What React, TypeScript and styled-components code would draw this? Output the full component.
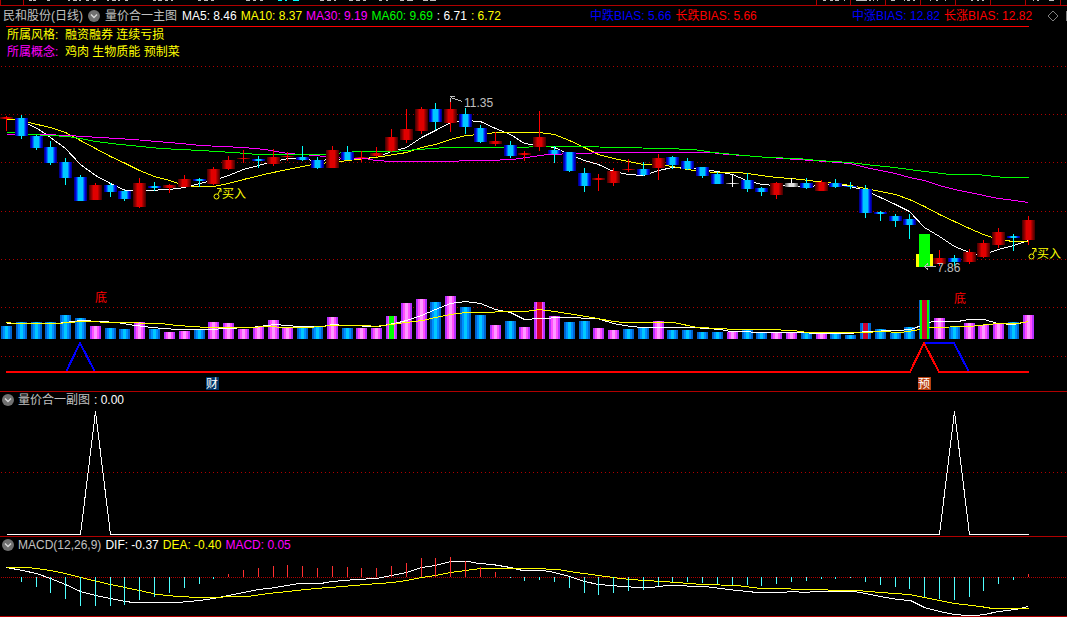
import React from "react";
import styled, { createGlobalStyle } from "styled-components";

const GlobalStyle = createGlobalStyle`
  * { box-sizing: border-box; }
  body {
    margin: 0;
    background: #000;
    font-family: "Liberation Sans", "Noto Sans CJK SC", sans-serif;
    font-size: 12px;
  }
`;

const RULE = "#b00000";
const SILVER = "#c0c0c0";
const YELLOW = "#ffff00";
const MAGENTA = "#ff00ff";
const WHITE = "#ffffff";
const RED = "#ff0000";
const GREEN = "#00ff00";
const BLUE = "#0000ff";

/* ---------- market data, in chart coordinates ---------- */

type Kind = "r" | "b" | "w";
type Candle = [Kind, number, number, number, number];

// kind, high, body top, body bottom, low
const candles: (Candle | null)[] = [
  ["r", 116, 117, 119, 131], ["b", 115, 118, 136, 139], ["b", 135, 136, 148, 150],
  ["b", 141, 147, 163, 165], ["b", 158, 162, 178, 185], ["b", 175, 177, 201, 201],
  ["r", 183, 185, 200, 200], ["b", 183, 185, 192, 197], ["b", 190, 191, 199, 201],
  ["r", 178, 183, 207, 208], ["b", 182, 186, 188, 191], ["r", 184, 185, 188, 193],
  ["r", 175, 179, 187, 187], ["b", 178, 179, 181, 187], ["r", 167, 169, 184, 185],
  ["r", 156, 160, 169, 170], ["r", 150, 158, 159, 163], ["b", 156, 159, 161, 168],
  ["r", 149, 157, 164, 166], ["r", 152, 156, 157, 161], ["b", 146, 157, 160, 161],
  ["b", 157, 160, 168, 169], ["r", 146, 150, 168, 168], ["b", 146, 152, 160, 160],
  ["r", 151, 157, 158, 162], ["r", 147, 153, 156, 157], ["r", 129, 137, 151, 152],
  ["r", 109, 129, 140, 143], ["r", 107, 109, 131, 134], ["b", 103, 109, 122, 130],
  ["r", 100, 109, 123, 132], ["b", 108, 114, 127, 134], ["b", 125, 128, 142, 143],
  ["r", 132, 141, 144, 146], ["b", 141, 145, 156, 158], ["r", 151, 153, 155, 161],
  ["r", 111, 137, 147, 151], ["b", 146, 150, 154, 163], ["b", 152, 152, 171, 172],
  ["b", 168, 173, 186, 192], ["r", 174, 178, 180, 191], ["r", 168, 171, 183, 186],
  ["r", 159, 169, 170, 172], ["b", 162, 169, 175, 176], ["r", 154, 158, 168, 180],
  ["b", 156, 157, 165, 169], ["b", 158, 161, 169, 170], ["b", 167, 167, 176, 178],
  ["b", 172, 174, 184, 184], ["w", 175, 183, 184, 187], ["b", 173, 180, 189, 192],
  ["b", 187, 188, 192, 196], ["r", 182, 183, 195, 199], ["w", 178, 183, 187, 187],
  ["b", 178, 183, 188, 189], ["r", 180, 182, 191, 191], ["b", 179, 183, 187, 188],
  ["b", 182, 186, 187, 189], ["b", 185, 189, 213, 218], ["b", 211, 212, 214, 221],
  ["b", 214, 216, 221, 227], ["b", 214, 219, 225, 239], null,
  ["r", 250, 258, 264, 266], ["b", 255, 258, 262, 266], ["r", 249, 252, 262, 264],
  ["r", 240, 243, 257, 258], ["r", 228, 232, 245, 248], ["b", 234, 236, 238, 251],
  ["r", 216, 220, 240, 245],
];

const volumeKinds = "bbbbbbpbbpbppbpppppp" + "bbpbpppppbpbbpbpppbb" + "ppbbpbbbbpbbppbpbbbb" + "bbbpbpppbp";
const volumeTops = [
  326, 322, 322, 322, 315, 318, 326, 328, 329, 322, 329, 332, 331, 330, 322, 323, 329, 327, 320, 328,
  327, 327, 317, 328, 328, 328, 316, 303, 299, 302, 296, 307, 315, 325, 321, 327, 302, 316, 322, 321,
  328, 330, 329, 327, 321, 330, 330, 332, 332, 332, 330, 333, 333, 333, 333, 334, 334, 335, 323, 329,
  333, 327, 300, 318, 327, 323, 325, 324, 322, 315,
];
const VOLUME_BASE = 339;

const macdEnds = [
  577, 582, 587, 593, 599, 606, 606, 606, 605, 600, 597, 593, 588, 584, 579, 574, 570, 568, 566, 565,
  566, 568, 566, 567, 568, 568, 566, 563, 558, 558, 557, 561, 567, 572, 578, 581, 580, 582, 588, 593,
  595, 593, 591, 590, 586, 582, 582, 583, 584, 585, 585, 586, 584, 582, 581, 579, 579, 578, 582, 585,
  587, 589, 597, 599, 600, 597, 591, 584, 580, 574,
];

const ma5 =
  "6,118 15,119 28,124 37,128 50,137 65,148 80,164 95,175 110,183 125,190 147,190 169,189 184,187 199,183 213,180 228,175 243,169 258,165 273,161 288,158 302,159 317,160 332,159 347,158 361,158 376,157 391,151 406,147 421,137 435,130 450,122 465,120 480,121 495,128 510,134 524,143 539,145 554,147 569,154 584,160 598,164 613,171 628,174 643,175 658,170 672,167 687,167 702,169 717,171 732,174 746,180 761,184 776,185 806,186 835,184 850,186 865,190 880,197 895,204 909,211 924,227 939,236 954,246 969,252 975,254 983,254 998,249 1013,245 1028,240";
const ma10 =
  "6,119 15,119 28,122 50,127 65,132 80,140 95,148 110,156 125,163 139,170 154,176 169,180 184,185 192,186 213,186 228,183 243,179 268,173 287,169 302,166 317,163 332,162 347,160 365,158 382,156 406,152 421,147 435,144 450,139 465,135 480,134 495,132 539,132 554,134 569,140 584,147 598,154 613,158 628,161 643,164 658,164 672,166 687,169 702,171 717,172 739,172 761,175 776,177 791,178 817,181 835,183 850,185 865,188 880,191 895,194 909,199 924,206 939,214 954,221 969,228 983,234 992,237 1005,240 1013,241 1028,241";
const ma30 =
  "6,134 44,134 67,135 100,137 133,139 180,143 200,145 243,147 265,149 287,153 315,155 332,157 347,158 365,158 375,160 392,161 452,161 465,160 488,160 512,159 533,156 547,154 577,153 607,152 710,152 727,154 743,155 768,157 797,159 825,161 850,163 865,167 880,170 895,173 909,177 924,180 939,185 954,189 969,192 998,198 1014,200 1028,202";
const ma60 =
  "6,132 14,132 29,134 50,135 67,136 80,138 95,141 120,144 160,148 200,150 233,152 257,154 325,154 345,152 358,151 392,151 418,149 445,147 525,147 533,146 577,146 620,147 663,148 693,149 713,152 743,155 768,157 797,158 817,160 850,162 865,164 894,167 924,171 950,174 977,174 1004,177 1028,177";
const volFast =
  "6,323 57,323 80,320 100,321 117,322 128,324 143,326 162,328 178,329 213,329 223,328 250,327 275,324 298,326 322,326 332,324 345,325 378,326 398,322 406,320 421,315 435,309 450,303 465,301 480,303 495,309 510,312 524,319 539,318 563,317 597,318 613,323 630,326 643,327 693,327 720,329 730,331 770,332 800,332 817,333 850,333 865,331 897,330 910,329 924,324 932,321 957,321 969,319 984,319 997,323 1013,324 1028,321";
const volSlow =
  "6,322 15,323 57,323 80,321 117,322 160,323 177,325 207,327 247,327 268,326 285,327 308,327 332,325 365,325 375,326 398,323 422,320 435,317 450,314 465,312 525,311 539,309 554,311 580,315 597,318 613,321 623,322 673,322 697,327 720,328 733,329 767,329 793,330 807,332 865,332 880,331 900,332 914,330 930,327 969,326 997,323 1017,323 1028,321";
const dif =
  "6,567 22,570 36,573 50,578 65,584 80,591 95,595 110,598 125,601 133,602 177,602 199,600 213,598 228,595 243,592 258,589 268,588 287,585 298,583 320,583 332,581 355,579 376,578 391,575 406,572 421,567 435,565 450,561 468,561 478,563 492,564 510,567 522,570 542,570 554,572 569,576 584,581 598,584 610,585 637,587 650,587 667,585 705,586 720,588 737,590 757,592 780,592 793,591 803,592 817,591 854,591 865,593 880,596 897,599 910,600 924,607 939,611 954,614 967,615 975,615 984,614 998,611 1015,609 1028,606";
const dea =
  "6,567 28,567 50,570 65,573 80,577 110,584 139,590 157,594 177,596 199,597 247,596 268,593 287,591 315,588 342,586 365,584 392,582 406,580 421,577 435,575 450,572 465,570 480,568 533,568 557,569 569,571 598,575 620,578 643,580 663,581 702,584 737,585 760,588 783,588 797,589 857,590 880,592 909,594 924,597 939,600 954,603 980,606 992,608 1028,608";

const barX = (i: number) => Math.round(6 + i * 14.81);

/* ---------- styled parts ---------- */

const Screen = styled.main`
  width: 100%;
  background: #000;
`;

const TopStrip = styled.div`
  display: flex;
  height: 6px;
  border-bottom: 1px solid ${RULE};
  overflow: hidden;
`;

const StripCell = styled.div<{ $width: number }>`
  flex: 0 0 ${(p) => p.$width}px;
  border-left: 1px solid ${RULE};
  overflow: hidden;
`;

const StripPeriods = styled.div`
  flex: 1;
  border-left: 1px solid ${RULE};
  overflow: hidden;
`;

const StripMarks = styled.svg`
  display: block;
  height: 1px;
`;

const Panel = styled.section`
  border-bottom: 1px solid ${RULE};
`;

const MainHeader = styled.header`
  display: grid;
  grid-template-columns: 590fr 262fr 215fr;
  align-items: center;
  height: 20px;
  white-space: nowrap;
`;

const SubHeader = styled.header`
  display: flex;
  align-items: center;
  gap: 4px;
  height: 18px;
  padding: 0 0 2px 2px;
  white-space: nowrap;
`;

const Group = styled.div<{ $gap: number; $indent?: number }>`
  display: flex;
  align-items: center;
  gap: ${(p) => p.$gap}px;
  padding-left: ${(p) => p.$indent ?? 0}px;
  min-width: 0;
`;

const Label = styled.span<{ $color: string }>`
  color: ${(p) => p.$color};
  line-height: 16px;
`;

const Toggle = styled.button`
  display: block;
  flex: none;
  width: 12px;
  height: 12px;
  padding: 0;
  border: 0;
  background: none;
`;

const Tools = styled.div`
  display: flex;
  align-items: center;
  gap: 7px;
  margin-left: auto;
`;

const ToolEdge = styled.span`
  width: 1px;
  height: 10px;
  background: #808080;
`;

const TopLine = styled.div`
  height: 1px;
  margin: 0 38px 0 6px;
  background: ${RED};
`;

const Facts = styled.dl`
  margin: 0;
  padding-left: 7px;
`;

const Fact = styled.div`
  display: flex;
  height: 17px;
  line-height: 16px;
`;

const FactName = styled.dt<{ $color: string }>`
  width: 58px;
  color: ${(p) => p.$color};
`;

const FactValue = styled.dd`
  margin: 0;
  color: ${YELLOW};
`;

const Chart = styled.svg`
  display: block;
  width: 100%;
  height: auto;
  font-size: 12px;
`;

/* ---------- drawing helpers ---------- */

const ToggleIcon = () => (
  <Toggle aria-label="展开">
    <svg width="12" height="12" viewBox="0 0 12 12">
      <circle cx="6" cy="6" r="6" fill="#707070" />
      <path d="M3 4.5 L6 7.5 L9 4.5" fill="none" stroke="#d8d8d8" strokeWidth="1.4" />
    </svg>
  </Toggle>
);

const GridLine = ({ y, step = 4 }: { y: number; step?: number }) => (
  <line
    x1={1}
    x2={1067}
    y1={y + 0.5}
    y2={y + 0.5}
    stroke="#b00000"
    strokeDasharray={`1 ${step - 1}`}
    shapeRendering="crispEdges"
  />
);

const Curve = ({ points, color, width = 1 }: { points: string; color: string; width?: number }) => (
  <polyline
    points={points}
    fill="none"
    stroke={color}
    strokeWidth={width}
    shapeRendering="crispEdges"
    transform={width === 1 ? "translate(0.5 0.5)" : undefined}
  />
);

// Symmetric stepped shading: colours run from the outer edge to the middle.
const Shade = ({ id, steps }: { id: string; steps: [string, number][] }) => {
  const all = [...steps, ...steps.slice(0, -1).reverse()];
  const total = all.reduce((n, s) => n + s[1], 0);
  let at = 0;
  return (
    <linearGradient id={id}>
      {all.map(([color, size], i) => {
        const from = at / total;
        at += size;
        return (
          <React.Fragment key={i}>
            <stop offset={from} stopColor={color} />
            <stop offset={at / total} stopColor={color} />
          </React.Fragment>
        );
      })}
    </linearGradient>
  );
};

const wickColor = { r: RED, b: "#00ffff", w: WHITE };

const CandleShape = ({ i, data }: { i: number; data: Candle }) => {
  const [kind, high, top, bottom, low] = data;
  const x = barX(i);
  return (
    <g>
      <rect x={x - 6} y={top} width={13} height={bottom - top} fill={`url(#candle-${kind})`} />
      <rect x={x} y={high} width={1} height={top - high} fill={wickColor[kind]} />
      <rect x={x} y={bottom} width={1} height={low - bottom} fill={wickColor[kind]} />
      {bottom - top < 3 && <rect x={x} y={high} width={1} height={low - high} fill={wickColor[kind]} />}
    </g>
  );
};

const VolumeBar = ({ i }: { i: number }) => (
  <rect
    x={barX(i) - 5}
    y={volumeTops[i]}
    width={11}
    height={VOLUME_BASE - volumeTops[i]}
    fill={`url(#vol-${volumeKinds[i]})`}
  />
);

const Core = ({ i, color, width }: { i: number; color: string; width: number }) => (
  <rect
    x={barX(i) - (width - 1) / 2}
    y={volumeTops[i]}
    width={width}
    height={VOLUME_BASE - volumeTops[i]}
    fill={color}
  />
);

const Marks = ({ marks, width }: { marks: [number, number, string?][]; width: number }) => (
  <StripMarks width={width} height="1" viewBox={`0 0 ${width} 1`} shapeRendering="crispEdges" aria-hidden="true">
    {marks.map(([x, w, color], i) => (
      <rect key={i} x={x} y={0} width={w} height={1} fill={color ?? SILVER} />
    ))}
  </StripMarks>
);

const periodMarks: [number, number, string?][] = [
  [5, 3], [9, 3], [23, 3], [44, 2], [49, 4], [55, 2], [62, 3], [69, 3], [83, 2], [88, 4], [94, 2], [101, 3],
  [129, 3], [134, 4], [141, 3], [147, 2], [174, 3], [180, 4], [187, 3], [222, 4], [229, 3], [236, 3],
  [254, 4, "#00ffff"], [261, 2, "#00ffff"], [269, 6, "#00ffff"], [296, 4], [303, 4], [310, 2], [325, 4],
  [332, 4], [339, 3], [355, 3], [362, 2], [376, 4], [383, 6], [399, 5], [406, 6],
];

const toolMarks: [number, number][][] = [
  [[6, 3], [13, 3], [18, 4], [27, 1]],
  [[5, 11], [18, 2], [22, 1], [26, 1]],
  [[5, 4], [18, 1], [21, 3], [27, 2]],
  [[9, 1], [15, 2], [24, 1]],
  [[15, 2], [21, 2], [26, 2]],
  [],
  [[7, 1], [11, 2], [23, 5]],
];

/* ---------- panels ---------- */

const MainChart = () => (
  <Chart viewBox="0 61 1067 330" role="img" aria-label="量价合一主图">
    <defs>
      <Shade id="candle-b" steps={[["#000090", 1], ["#0000c8", 1], ["#0028f0", 1], ["#0078ff", 1], ["#00c8ff", 5]]} />
      <Shade id="candle-r" steps={[["#500000", 1], ["#700000", 1], ["#900000", 1], ["#b80000", 1], ["#e00000", 5]]} />
      <Shade id="candle-w" steps={[["#606060", 1], ["#808080", 1], ["#a0a0a0", 1], ["#c0c0c0", 1], ["#e0e0e0", 5]]} />
      <Shade id="vol-b" steps={[["#0064d0", 2], ["#0090ff", 2], ["#00c8ff", 3]]} />
      <Shade id="vol-p" steps={[["#b830ff", 2], ["#ff50ff", 2], ["#ff98ff", 3]]} />
    </defs>
    {[66, 114, 162, 211, 259, 307, 356].map((y) => (
      <GridLine key={y} y={y} />
    ))}
    <Curve points={ma5} color={WHITE} />
    <Curve points={ma10} color={YELLOW} />
    <Curve points={ma30} color={MAGENTA} />
    <Curve points={ma60} color={GREEN} />
    <g shapeRendering="crispEdges">
      {candles.map((c, i) => c && <CandleShape key={i} i={i} data={c} />)}
      <rect x={916} y={254} width={17} height={13} fill={YELLOW} />
      <rect x={919} y={234} width={11} height={33} fill={GREEN} />
      {volumeTops.map((_, i) => (
        <VolumeBar key={i} i={i} />
      ))}
      <Core i={26} color={GREEN} width={5} />
      <Core i={36} color="#d00030" width={5} />
      <Core i={58} color="#d00030" width={5} />
    </g>
    <Curve points={volFast} color={WHITE} />
    <Curve points={volSlow} color={YELLOW} />
    <g shapeRendering="crispEdges">
      <Core i={62} color={GREEN} width={9} />
      <Core i={62} color="#d00030" width={5} />
    </g>
    <Curve points="66,372 80,343 95,372" color={BLUE} width={2} />
    <Curve points="924,343 954,343 969,372" color={BLUE} width={2} />
    <Curve points="6,372 910,372 924,343 939,372 1029,372" color={RED} width={2} />

    <g fill="none" stroke={SILVER} shapeRendering="crispEdges">
      <path d="M462 101.5 L451 97.5 M450.5 102 V97.5 M450 96.5 H455" />
      <path d="M936 266.5 H924 M928 263.5 L924.5 266.5 L928 269.5" />
    </g>
    <text x={464} y={107} fill={SILVER}>11.35</text>
    <text x={937} y={272} fill={SILVER}>7.86</text>
    <g fill="none" stroke={YELLOW}>
      <circle cx={216.5} cy={196.5} r={2.5} />
      <path d="M218 194 L220.5 189 M217 188.5 H221 V192" />
      <circle cx={1031.5} cy={256.5} r={2.5} />
      <path d="M1033 254 L1035.5 249 M1032 248.5 H1036 V252" />
    </g>
    <text x={222} y={198} fill={YELLOW}>买入</text>
    <text x={1037} y={258} fill={YELLOW}>买入</text>
    <text x={95} y={302} fill={RED}>底</text>
    <text x={954} y={303} fill={RED}>底</text>
    <rect x={206} y={377} width={13} height={13} fill="#003468" />
    <text x={206} y={388} fill={WHITE}>财</text>
    <rect x={918} y={377} width={13} height={13} fill="#b84010" />
    <text x={918} y={388} fill={WHITE}>预</text>
  </Chart>
);

const SubChart = () => (
  <Chart viewBox="0 410 1067 126" role="img" aria-label="量价合一副图">
    <GridLine y={472} />
    <Curve points="6,534 80,534 95,411 110,534 939,534 954,411 969,534 1028,534" color={WHITE} />
  </Chart>
);

const MacdChart = () => (
  <Chart viewBox="0 555 1067 61" role="img" aria-label="MACD">
    <GridLine y={577} step={2} />
    <Curve points={dif} color={WHITE} />
    <Curve points={dea} color={YELLOW} />
    <g shapeRendering="crispEdges">
      {macdEnds.map((end, i) => (
        <rect
          key={i}
          x={barX(i)}
          y={Math.min(end, 577)}
          width={1}
          height={Math.abs(end - 577)}
          fill={end < 577 ? "#ff3030" : "#50ffff"}
        />
      ))}
    </g>
  </Chart>
);

export default function App() {
  return (
    <Screen>
      <GlobalStyle />
      <TopStrip>
        <StripCell $width={23} />
        <StripPeriods>
          <Marks marks={periodMarks} width={420} />
        </StripPeriods>
        {toolMarks.map((marks, i) => (
          <StripCell key={i} $width={i === 0 ? 34 : 35}>
            <Marks marks={marks} width={34} />
          </StripCell>
        ))}
        <StripCell $width={7} />
      </TopStrip>

      <Panel>
        <MainHeader>
          <Group $gap={5} $indent={3}>
            <Label $color={SILVER}>民和股份(日线)</Label>
            <ToggleIcon />
            <Label $color={SILVER}>量价合一主图</Label>
            <Group $gap={4}>
              <Label $color={WHITE}>MA5: 8.46</Label>
              <Label $color={YELLOW}>MA10: 8.37</Label>
              <Label $color={MAGENTA}>MA30: 9.19</Label>
              <Label $color={GREEN}>MA60: 9.69</Label>
              <Label $color={WHITE}>: 6.71</Label>
              <Label $color={YELLOW}>: 6.72</Label>
            </Group>
          </Group>
          <Group $gap={4}>
            <Label $color={BLUE}>中跌BIAS: 5.66</Label>
            <Label $color={RED}>长跌BIAS: 5.66</Label>
          </Group>
          <Group $gap={4}>
            <Label $color={BLUE}>中涨BIAS: 12.82</Label>
            <Label $color={RED}>长涨BIAS: 12.82</Label>
            <Tools>
              <Toggle aria-label="标记">
                <svg width="12" height="12" viewBox="0 0 12 12">
                  <path d="M6 1 L11 6 L6 11 L1 6 Z" fill="none" stroke="#808080" />
                </svg>
              </Toggle>
              <ToolEdge />
            </Tools>
          </Group>
        </MainHeader>
        <TopLine />
        <Facts>
          <Fact>
            <FactName $color={YELLOW}>所属风格:</FactName>
            <FactValue>融资融券 连续亏损</FactValue>
          </Fact>
          <Fact>
            <FactName $color={MAGENTA}>所属概念:</FactName>
            <FactValue>鸡肉 生物质能 预制菜</FactValue>
          </Fact>
        </Facts>
        <MainChart />
      </Panel>

      <Panel>
        <SubHeader>
          <ToggleIcon />
          <Label $color={SILVER}>量价合一副图</Label>
          <Label $color={WHITE}>: 0.00</Label>
        </SubHeader>
        <SubChart />
      </Panel>

      <Panel>
        <SubHeader>
          <ToggleIcon />
          <Label $color={SILVER}>MACD(12,26,9)</Label>
          <Label $color={WHITE}>DIF: -0.37</Label>
          <Label $color={YELLOW}>DEA: -0.40</Label>
          <Label $color={MAGENTA}>MACD: 0.05</Label>
        </SubHeader>
        <MacdChart />
      </Panel>
    </Screen>
  );
}
